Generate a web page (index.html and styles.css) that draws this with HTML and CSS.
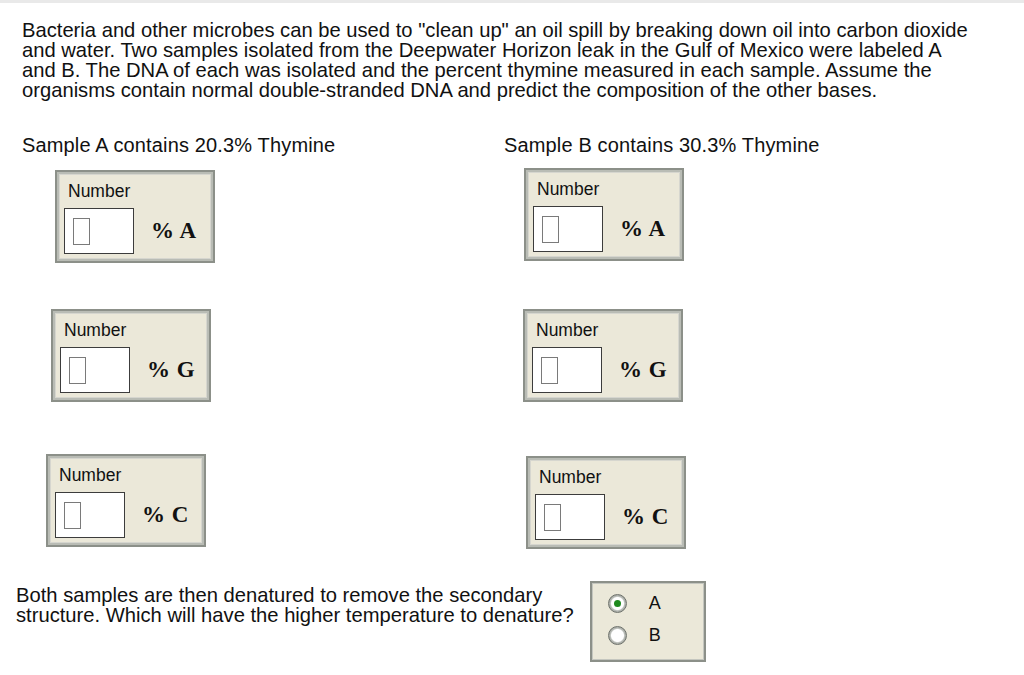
FILE: index.html
```html
<!DOCTYPE html>
<html>
<head>
<meta charset="utf-8">
<link rel="stylesheet" href="styles.css">
</head>
<body>
<div class="topline"></div>
<main class="page">
  <p class="intro">Bacteria and other microbes can be used to "clean up" an oil spill by breaking down oil into carbon dioxide<br>and water. Two samples isolated from the Deepwater Horizon leak in the Gulf of Mexico were labeled A<br>and B. The DNA of each was isolated and the percent thymine measured in each sample. Assume the<br>organisms contain normal double-stranded DNA and predict the composition of the other bases.</p>

  <div class="samples">
    <div class="col col-a">
      <div class="sample-title">Sample A contains 20.3% Thymine</div>
      <div class="box a1">
        <div class="label">Number</div>
        <div class="row"><div class="input"><span class="caret"></span></div><span class="unit">% A</span></div>
      </div>
      <div class="box a2">
        <div class="label">Number</div>
        <div class="row"><div class="input"><span class="caret"></span></div><span class="unit">% G</span></div>
      </div>
      <div class="box a3">
        <div class="label">Number</div>
        <div class="row"><div class="input"><span class="caret"></span></div><span class="unit">% C</span></div>
      </div>
    </div>
    <div class="col col-b">
      <div class="sample-title">Sample B contains 30.3% Thymine</div>
      <div class="box b1">
        <div class="label">Number</div>
        <div class="row"><div class="input"><span class="caret"></span></div><span class="unit">% A</span></div>
      </div>
      <div class="box b2">
        <div class="label">Number</div>
        <div class="row"><div class="input"><span class="caret"></span></div><span class="unit">% G</span></div>
      </div>
      <div class="box b3">
        <div class="label">Number</div>
        <div class="row"><div class="input"><span class="caret"></span></div><span class="unit">% C</span></div>
      </div>
    </div>
  </div>

  <div class="question">
    <p class="qtext">Both samples are then denatured to remove the secondary<br>structure. Which will have the higher temperature to denature?</p>
    <div class="radios">
      <div class="opt"><span class="radio checked"><span class="dot"></span></span><span class="opt-label">A</span></div>
      <div class="opt"><span class="radio"></span><span class="opt-label">B</span></div>
    </div>
  </div>
</main>
</body>
</html>
```

FILE: styles.css
```css
* { box-sizing: border-box; }
html, body { margin: 0; padding: 0; background: #fff; }
body {
  font-family: "Liberation Sans", Arial, sans-serif;
  color: #111;
  width: 1024px;
  height: 675px;
  overflow: hidden;
}
.topline {
  height: 3px;
  background: #e9e9e9;
}
.page {
  padding: 0 0 0 22px;
}
.intro {
  margin: 17px 0 0 0;
  width: 990px;
  font-size: 20.2px;
  line-height: 20px;
  white-space: nowrap;
}
.samples {
  display: grid;
  grid-template-columns: 482px 300px;
  margin-top: 34px;
}
.col { display: flex; flex-direction: column; align-items: flex-start; }
.sample-title {
  font-size: 20px;
  line-height: 22px;
  letter-spacing: 0.15px;
  white-space: nowrap;
}
.box {
  width: 160px;
  height: 93px;
  background: #ebe8d9;
  border: 2px solid #8c9089;
  box-shadow: inset 0 0 0 2px #b9bcb5, inset 0 0 0 3px #d6d6cf;
  padding: 9px 0 0 7px;
}
.label {
  font-size: 17.5px;
  line-height: 20px;
  margin-left: 4px;
}
.row {
  display: flex;
  align-items: center;
  margin-top: 7px;
}
.input {
  width: 70px;
  height: 46px;
  background: #fff;
  border: 1px solid #3c3c3c;
  display: flex;
  align-items: center;
  padding-left: 8px;
}
.caret {
  display: block;
  width: 17px;
  height: 27px;
  border: 1px solid #7a7a7a;
}
.unit {
  font-family: "Liberation Serif", "Times New Roman", serif;
  font-weight: bold;
  font-size: 23px;
  margin-left: 17px;
  word-spacing: 1px;
}
.a1 { margin: 14px 0 0 33px; }
.a2 { margin: 46px 0 0 29px; }
.a3 { margin: 52px 0 0 24px; }
.b1 { margin: 12px 0 0 20px; }
.b2 { margin: 48px 0 0 19px; }
.b3 { margin: 54px 0 0 22px; }
.question {
  display: flex;
  align-items: flex-start;
  margin: 32px 0 0 -6px;
}
.qtext {
  margin: 4px 0 0 0;
  font-size: 20.2px;
  line-height: 20px;
  white-space: nowrap;
}
.radios {
  margin-left: 16px;
  width: 116px;
  height: 81px;
  background: #ebe8d9;
  border: 2px solid #8c9089;
  box-shadow: inset 0 0 0 1px #c4c6bf;
  padding: 11px 0 0 16px;
  display: flex;
  flex-direction: column;
  gap: 13px;
}
.opt { display: flex; align-items: center; height: 19px; }
.radio {
  width: 19px;
  height: 19px;
  border-radius: 50%;
  background: radial-gradient(circle at 50% 50%, #fff 0, #fff 50%, #b8bbb6 60%, #7d817b 100%);
  display: flex;
  align-items: center;
  justify-content: center;
  border: 1px solid #6f736d;
}
.dot {
  width: 7px;
  height: 7px;
  border-radius: 50%;
  background: #1e8a1e;
}
.opt-label {
  font-size: 18px;
  margin-left: 22px;
}
```
